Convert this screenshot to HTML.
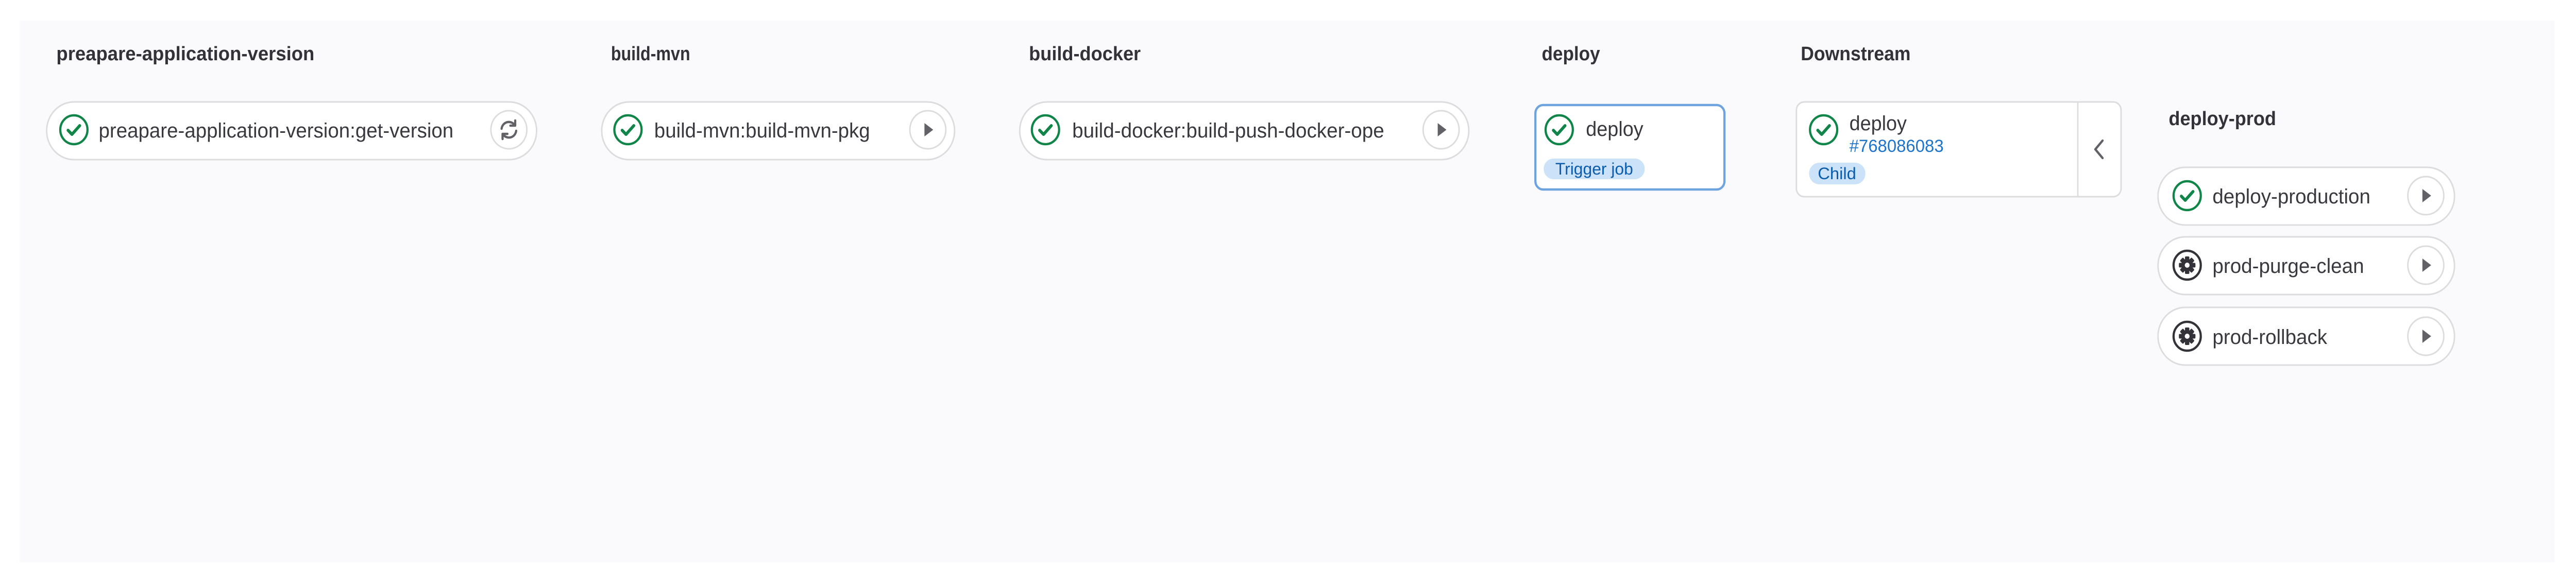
<!DOCTYPE html>
<html><head><meta charset="utf-8"><style>
html,body{margin:0;padding:0;background:#fff;width:100%;height:100%;overflow:hidden}
svg{display:block;width:100vw;height:100vh;position:fixed;left:0;top:0}
text{font-family:"Liberation Sans",sans-serif}
.h{font-weight:bold;font-size:38px;fill:#333238}
.t{font-size:40px;fill:#3a383f}
</style></head><body>
<svg viewBox="0 0 5300 1140" preserveAspectRatio="none" xmlns="http://www.w3.org/2000/svg">
<defs>
<g id="ok"><circle r="28" fill="#fff" stroke="#108548" stroke-width="4.5"/><path d="M-12 1 L-4 9 L12 -8" fill="none" stroke="#108548" stroke-width="6" stroke-linecap="round" stroke-linejoin="round"/></g>
<g id="play"><circle r="37" fill="#fff" stroke="#dcdcde" stroke-width="3"/><path d="M-7 -13 L11 0 L-7 13 Z" fill="#626168"/></g>
<g id="man"><circle r="28" fill="#fff" stroke="#333238" stroke-width="4.5"/>
<g fill="#333238"><circle r="12"/>
<rect x="-4.5" y="-17" width="9" height="34" rx="2"/>
<rect x="-4.5" y="-17" width="9" height="34" rx="2" transform="rotate(45)"/>
<rect x="-4.5" y="-17" width="9" height="34" rx="2" transform="rotate(90)"/>
<rect x="-4.5" y="-17" width="9" height="34" rx="2" transform="rotate(135)"/></g>
<circle r="5" fill="#fff"/></g>
</defs>
<rect x="40" y="40" width="5216" height="1052" fill="#fafafc"/>

<text class="h" x="116" y="117" textLength="531" lengthAdjust="spacingAndGlyphs">preapare-application-version</text>
<text class="h" x="1257" y="117" textLength="163" lengthAdjust="spacingAndGlyphs">build-mvn</text>
<text class="h" x="2117" y="117" textLength="230" lengthAdjust="spacingAndGlyphs">build-docker</text>
<text class="h" x="3172" y="117" textLength="120" lengthAdjust="spacingAndGlyphs">deploy</text>
<text class="h" x="3705" y="117" textLength="226" lengthAdjust="spacingAndGlyphs">Downstream</text>
<text class="h" x="4462" y="243" textLength="221" lengthAdjust="spacingAndGlyphs">deploy-prod</text>

<rect x="96" y="198" width="1008" height="112" rx="56" fill="#fff" stroke="#dcdcde" stroke-width="3"/>
<use href="#ok" x="152" y="252"/>
<text class="t" x="203" y="267" textLength="730" lengthAdjust="spacingAndGlyphs">preapare-application-version:get-version</text>
<circle cx="1047" cy="252" r="37" fill="#fff" stroke="#dcdcde" stroke-width="3"/>
<g transform="translate(1047 252)" fill="none" stroke="#626168" stroke-width="4.5" stroke-linecap="round">
<path d="M-15 -2 A15 15 0 0 1 12 -9"/><path d="M15 2 A15 15 0 0 1 -12 9"/>
<path d="M13 -18 L13 -8 L3 -8" stroke-linejoin="round"/><path d="M-13 18 L-13 8 L-3 8" stroke-linejoin="round"/></g>

<rect x="1238" y="198" width="726" height="112" rx="56" fill="#fff" stroke="#dcdcde" stroke-width="3"/>
<use href="#ok" x="1292" y="252"/>
<text class="t" x="1346" y="267" textLength="444" lengthAdjust="spacingAndGlyphs">build-mvn:build-mvn-pkg</text>
<use href="#play" x="1909" y="252"/>

<rect x="2098" y="198" width="924" height="112" rx="56" fill="#fff" stroke="#dcdcde" stroke-width="3"/>
<use href="#ok" x="2151" y="252"/>
<text class="t" x="2206" y="267" textLength="642" lengthAdjust="spacingAndGlyphs">build-docker:build-push-docker-ope</text>
<use href="#play" x="2965" y="252"/>

<rect x="3159" y="204" width="389" height="164" rx="16" fill="#fff" stroke="#6ea3df" stroke-width="4.5"/>
<use href="#ok" x="3208" y="252"/>
<text class="t" x="3263" y="264" textLength="118" lengthAdjust="spacingAndGlyphs">deploy</text>
<rect x="3176" y="308" width="208" height="40" rx="20" fill="#cbe2f9"/>
<text x="3200" y="339" font-size="32" fill="#0b5cad" textLength="160" lengthAdjust="spacingAndGlyphs">Trigger job</text>

<rect x="3696" y="198" width="668" height="184" rx="16" fill="#fff" stroke="#dcdcde" stroke-width="3"/>
<line x1="4275" y1="198" x2="4275" y2="382" stroke="#dcdcde" stroke-width="3"/>
<path d="M4326 273 L4311 290 L4326 307" fill="none" stroke="#626168" stroke-width="4.5" stroke-linecap="round" stroke-linejoin="round"/>
<use href="#ok" x="3752" y="252"/>
<text class="t" x="3805" y="253" textLength="118" lengthAdjust="spacingAndGlyphs">deploy</text>
<text x="3805" y="295" font-size="34" fill="#1f75cb" textLength="194" lengthAdjust="spacingAndGlyphs">#768086083</text>
<rect x="3722" y="316" width="116" height="42" rx="21" fill="#cbe2f9"/>
<text x="3740" y="348" font-size="32" fill="#0b5cad" textLength="79" lengthAdjust="spacingAndGlyphs">Child</text>

<rect x="4440" y="325" width="610" height="112" rx="56" fill="#fff" stroke="#dcdcde" stroke-width="3"/>
<use href="#ok" x="4500" y="380"/>
<text class="t" x="4552" y="395" textLength="325" lengthAdjust="spacingAndGlyphs">deploy-production</text>
<use href="#play" x="4991" y="380"/>

<rect x="4440" y="460" width="610" height="112" rx="56" fill="#fff" stroke="#dcdcde" stroke-width="3"/>
<use href="#man" x="4500" y="515"/>
<text class="t" x="4552" y="530" textLength="312" lengthAdjust="spacingAndGlyphs">prod-purge-clean</text>
<use href="#play" x="4991" y="515"/>

<rect x="4440" y="597" width="610" height="112" rx="56" fill="#fff" stroke="#dcdcde" stroke-width="3"/>
<use href="#man" x="4500" y="653"/>
<text class="t" x="4552" y="668" textLength="236" lengthAdjust="spacingAndGlyphs">prod-rollback</text>
<use href="#play" x="4991" y="653"/>
</svg>
</body></html>
